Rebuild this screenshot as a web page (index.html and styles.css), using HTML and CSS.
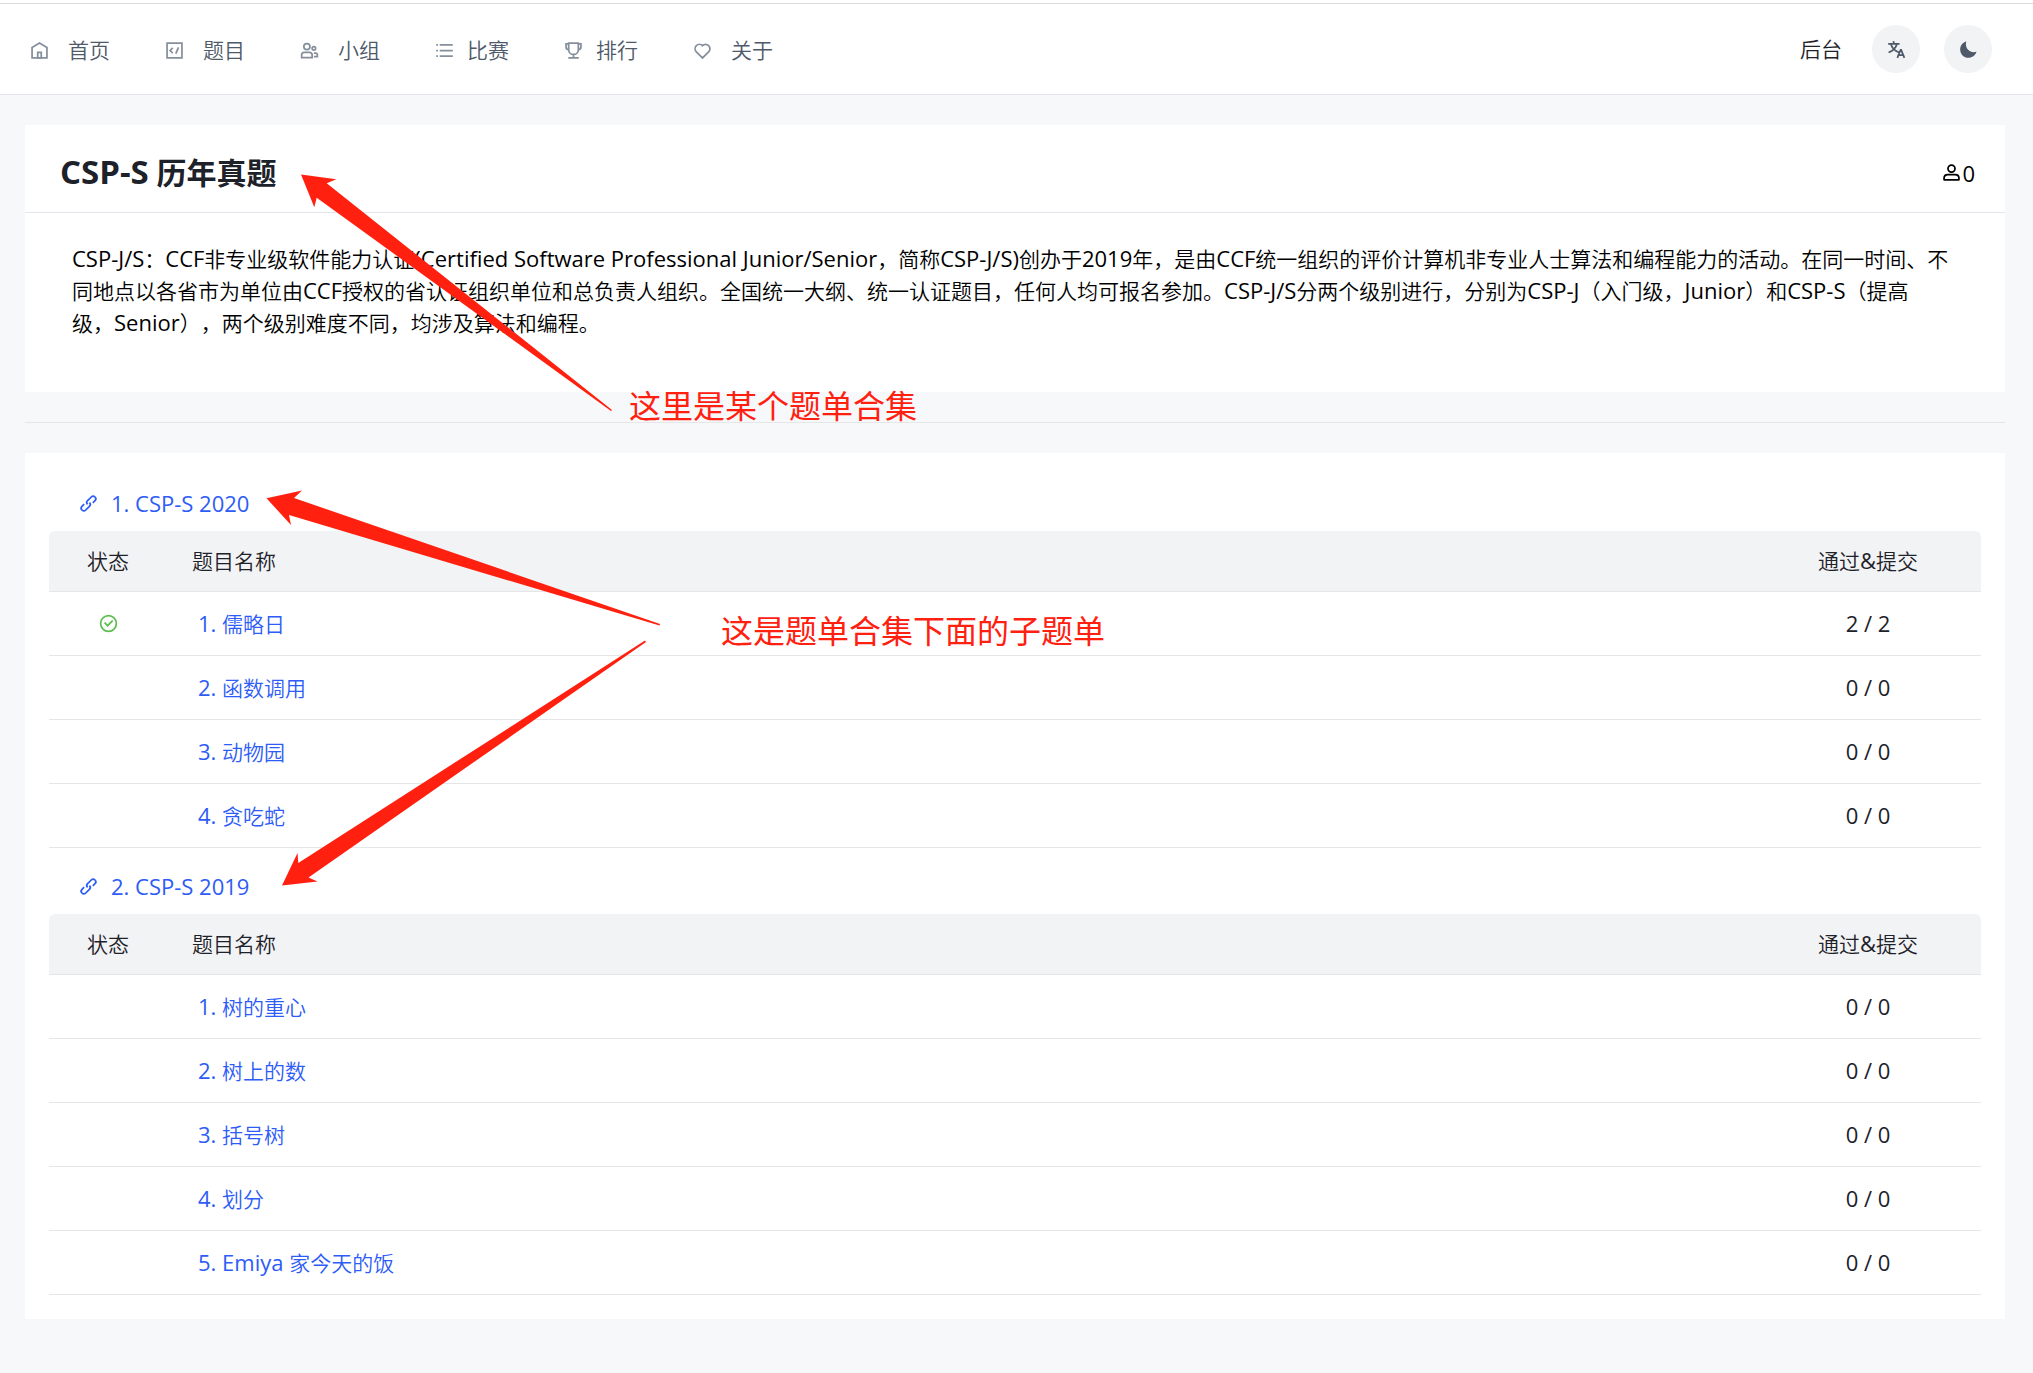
FILE: index.html
```html
<!DOCTYPE html>
<html lang="zh-CN">
<head>
<meta charset="utf-8">
<title>CSP-S 历年真题</title>
<meta name="viewport" content="width=device-width, initial-scale=1">
<link rel="stylesheet" href="styles.css">
</head>
<body>
<div class="page-edge"></div>
<header class="topbar">
  <nav class="menu">
    <a href="#"><svg class="icon" viewBox="0 0 48 48"><path d="M7 17 24 7l17 10v24H7V17Z"/><path d="M20 28h8v13h-8V28Z"/></svg>首页</a>
    <a href="#"><svg class="icon" viewBox="0 0 48 48"><path d="M7 7h34v34H7z"/><path d="m20 18-6 6 6 6M33 17l-6 14"/></svg>题目</a>
    <a href="#"><svg class="icon" viewBox="0 0 48 48"><circle cx="18" cy="15" r="7"/><circle cx="34" cy="19" r="4"/><path d="M6 34a6 6 0 0 1 6-6h12a6 6 0 0 1 6 6v6H6v-6ZM34 30h4a4 4 0 0 1 4 4v4h-8"/></svg>小组</a>
    <a href="#" class="tight"><svg class="icon" viewBox="0 0 48 48"><path d="M13 24h30M5 11h4m4 26h30M13 11h30M5 24h4M5 37h4"/></svg>比赛</a>
    <a href="#" class="tight"><svg class="icon" viewBox="0 0 48 48"><path d="M24 33c-6.075 0-11-4.925-11-11m11 11c6.075 0 11-4.925 11-11M24 33v8M13 22V7h22v15m-22 0V9H7v7a6 6 0 0 0 6 6Zm22 0V9h6v7a6 6 0 0 1-6 6ZM12 41h24"/></svg>排行</a>
    <a href="#"><svg class="icon" viewBox="0 0 48 48"><path d="M38.083 12.912a9.957 9.957 0 0 1 0 14.082L24 41 9.917 26.994A9.958 9.958 0 0 1 24 12.912a9.958 9.958 0 0 1 14.083 0Z"/></svg>关于</a>
  </nav>
  <div class="tools">
    <a href="#" class="admin">后台</a>
    <button type="button" class="round" aria-label="语言"><svg class="icon" viewBox="0 0 48 48"><path d="m42 43-2.385-6M26 43l2.384-6m11.231 0-.795-2-4.18-10h-1.28l-4.181 10-.795 2m11.231 0h-11.23M17 5l1 5M5 11h26M11 11s1.889 7.826 6.611 12.174C22.333 27.522 30 31 30 31M25 11s-1.889 7.826-6.611 12.174C13.667 27.522 6 31 6 31"/></svg></button>
    <button type="button" class="round" aria-label="深色模式"><svg class="icon solid" viewBox="0 0 48 48"><path d="M42.108 29.769c.124-.387-.258-.736-.645-.613A17.99 17.99 0 0 1 36 30c-9.941 0-18-8.059-18-18 0-1.904.296-3.74.844-5.463.123-.387-.226-.768-.613-.645C10.558 8.334 5 15.518 5 24c0 10.493 8.507 19 19 19 8.482 0 15.666-5.558 18.108-13.231Z"/></svg></button>
  </div>
</header>

<main class="content">
  <section class="card">
    <div class="card-head">
      <h1><span class="latin">CSP-S</span> 历年真题</h1>
      <span class="members"><svg class="icon" viewBox="0 0 48 48"><path d="M7 37c0-4.97 4.03-8 9-8h16c4.97 0 9 3.03 9 8v3a1 1 0 0 1-1 1H8a1 1 0 0 1-1-1v-3Z"/><circle cx="24" cy="15" r="8"/></svg><span class="latin">0</span></span>
    </div>
    <p class="intro"><span class="latin">CSP-J/S</span>：<span class="latin">CCF</span>非专业级软件能力认证<span class="latin">(Certified Software Professional Junior/Senior</span>，简称<span class="latin">CSP-J/S)</span>创办于<span class="latin">2019</span>年，是由<span class="latin">CCF</span>统一组织的评价计算机非专业人士算法和编程能力的活动。在同一时间、不同地点以各省市为单位由<span class="latin">CCF</span>授权的省认证组织单位和总负责人组织。全国统一大纲、统一认证题目，任何人均可报名参加。<span class="latin">CSP-J/S</span>分两个级别进行，分别为<span class="latin">CSP-J</span>（入门级，<span class="latin">Junior</span>）和<span class="latin">CSP-S</span>（提高<span class="keep">级，<span class="latin">Senior</span>），</span>两个级别难度不同，均涉及算法和编程。</p>
  </section>

  <hr class="divider">

  <section class="card lists">
    <article>
      <h2><a href="#"><svg class="icon" viewBox="0 0 48 48"><path d="m14.1 25.414-4.95 4.95a6 6 0 0 0 8.486 8.485l8.485-8.485a6 6 0 0 0 0-8.485m7.779.707 4.95-4.95a6 6 0 1 0-8.486-8.485l-8.485 8.485a6 6 0 0 0 0 8.485"/></svg><span class="latin">1. CSP-S 2020</span></a></h2>
      <table>
        <thead><tr><th class="state">状态</th><th class="name">题目名称</th><th class="score">通过<span class="latin">&amp;</span>提交</th></tr></thead>
        <tbody>
          <tr><td class="state"><svg class="icon passed" viewBox="0 0 48 48"><circle cx="24" cy="24" r="18"/><path d="m15 22 7 7 11.5-11.5"/></svg></td><td class="name"><a href="#"><span class="latin">1. </span>儒略日</a></td><td class="score"><span class="latin">2 / 2</span></td></tr>
          <tr><td class="state"></td><td class="name"><a href="#"><span class="latin">2. </span>函数调用</a></td><td class="score"><span class="latin">0 / 0</span></td></tr>
          <tr><td class="state"></td><td class="name"><a href="#"><span class="latin">3. </span>动物园</a></td><td class="score"><span class="latin">0 / 0</span></td></tr>
          <tr><td class="state"></td><td class="name"><a href="#"><span class="latin">4. </span>贪吃蛇</a></td><td class="score"><span class="latin">0 / 0</span></td></tr>
        </tbody>
      </table>
    </article>
    <article>
      <h2><a href="#"><svg class="icon" viewBox="0 0 48 48"><path d="m14.1 25.414-4.95 4.95a6 6 0 0 0 8.486 8.485l8.485-8.485a6 6 0 0 0 0-8.485m7.779.707 4.95-4.95a6 6 0 1 0-8.486-8.485l-8.485 8.485a6 6 0 0 0 0 8.485"/></svg><span class="latin">2. CSP-S 2019</span></a></h2>
      <table>
        <thead><tr><th class="state">状态</th><th class="name">题目名称</th><th class="score">通过<span class="latin">&amp;</span>提交</th></tr></thead>
        <tbody>
          <tr><td class="state"></td><td class="name"><a href="#"><span class="latin">1. </span>树的重心</a></td><td class="score"><span class="latin">0 / 0</span></td></tr>
          <tr><td class="state"></td><td class="name"><a href="#"><span class="latin">2. </span>树上的数</a></td><td class="score"><span class="latin">0 / 0</span></td></tr>
          <tr><td class="state"></td><td class="name"><a href="#"><span class="latin">3. </span>括号树</a></td><td class="score"><span class="latin">0 / 0</span></td></tr>
          <tr><td class="state"></td><td class="name"><a href="#"><span class="latin">4. </span>划分</a></td><td class="score"><span class="latin">0 / 0</span></td></tr>
          <tr><td class="state"></td><td class="name"><a href="#"><span class="latin">5. Emiya </span>家今天的饭</a></td><td class="score"><span class="latin">0 / 0</span></td></tr>
        </tbody>
      </table>
    </article>
  </section>
</main>

<!-- Hand-placed notes over the page -->
<svg class="arrows" width="700" height="900" viewBox="0 0 700 900" aria-hidden="true">
  <path d="M301 174.5 336.3 179.3 326.7 183.3 612 410 611 411 316.7 197.7 314.3 207.3Z"/>
  <path d="M266.5 498.3 302 490.5 294 498 660 624 659.5 625.5 289 515 291 525Z"/>
  <path d="M282 885.5 297.5 853 298.3 863 645 640.5 646 642 308.5 877.5 317.5 881.5Z"/>
</svg>
<p class="note note-set">这里是某个题单合集</p>
<p class="note note-sub">这是题单合集下面的子题单</p>
</body>
</html>
```
FILE: styles.css
```css
* {
  box-sizing: border-box;
}

body {
  position: relative;
  margin: 0;
  min-height: 100vh;
  background: #f7f8fa;
  color: #1d2129;
  font-family: "Open Sans", "Noto Sans CJK SC", sans-serif;
  font-size: 21px;
  font-weight: 350;
  line-height: 32px;
  text-spacing-trim: space-all;
}

a {
  color: inherit;
  text-decoration: none;
}

.latin {
  font-size: 22px;
  font-weight: 400;
  line-height: 1;
}

.keep {
  white-space: nowrap;
}

.icon {
  flex: none;
  width: 21px;
  height: 21px;
  fill: none;
  stroke: currentColor;
  stroke-width: 4;
}

.icon.solid {
  fill: currentColor;
  stroke: none;
}

/* Top bar */
.page-edge {
  height: 4px;
  background: #fff;
  border-bottom: 1px solid #dcdcde;
}

.topbar {
  display: flex;
  align-items: center;
  justify-content: space-between;
  min-height: 91px;
  padding: 0 41px 0 29px;
  background: #fff;
  border-bottom: 1px solid #e5e6eb;
}

.menu {
  display: flex;
  gap: 54px;
  padding-top: 2px;
  color: #4e5969;
}

.menu a {
  display: flex;
  align-items: center;
  gap: 18px;
}

.menu a.tight {
  gap: 12px;
}

.menu .icon {
  color: #86909c;
}

.tools {
  display: flex;
  align-items: center;
  gap: 24px;
}

.admin {
  margin-right: 6px;
}

.round {
  display: flex;
  align-items: center;
  justify-content: center;
  width: 48px;
  height: 48px;
  padding: 0;
  border: 0;
  border-radius: 50%;
  background: #f2f3f5;
  color: #4e5969;
}

/* Cards */
.content {
  padding: 30px 28px 54px 25px;
}

.card {
  background: #fff;
}

.card-head {
  display: flex;
  align-items: center;
  justify-content: space-between;
  min-height: 88px;
  padding: 8px 30px 0 35px;
  border-bottom: 1px solid #e5e6eb;
}

h1 {
  margin: 0;
  font-size: 30px;
  font-weight: 700;
  line-height: 40px;
}

h1 .latin {
  font-size: 33px;
  font-weight: 700;
}

.members {
  display: flex;
  align-items: center;
  color: #000;
}

.intro {
  margin: 0;
  padding: 30px 47px 53px;
  color: #000;
}

.divider {
  margin: 30px 0;
  border: 0;
  border-top: 1px solid #e5e6e8;
}

/* Problem lists */
.lists {
  display: flex;
  flex-direction: column;
  gap: 12px;
  padding: 24px;
}

h2 {
  display: flex;
  margin: 0;
  padding: 10px 29px 12px;
  font-size: 21px;
  font-weight: 400;
  line-height: 32px;
}

h2 a {
  display: flex;
  align-items: center;
  gap: 12px;
  min-height: 32px;
  color: #2d5cf6;
}

table {
  width: 100%;
  border-collapse: separate;
  border-spacing: 0;
  table-layout: fixed;
}

th,
td {
  height: 64px;
  padding: 0 25px;
  border-bottom: 1px solid #e5e6e8;
  font-weight: 350;
  text-align: left;
}

th {
  height: 61px;
  background: #f2f3f5;
}

th:first-child {
  border-top-left-radius: 6px;
}

th:last-child {
  border-top-right-radius: 6px;
}

th.state,
td.state {
  width: 118px;
  text-align: center;
}

.state .icon {
  display: block;
  margin: 0 auto;
}

th.score,
td.score {
  width: 226px;
  text-align: center;
}

td.name {
  padding-left: 31px;
}

td a {
  color: #2d5cf6;
}

.passed {
  color: #5cbf50;
}

/* Notes */
.arrows {
  position: absolute;
  top: 0;
  left: 0;
  fill: #ff2010;
  pointer-events: none;
}

.note {
  position: absolute;
  margin: 0;
  color: #ff2010;
  font-size: 32px;
  font-weight: 400;
  line-height: 40px;
  white-space: nowrap;
}

.note-set {
  top: 386px;
  left: 629px;
}

.note-sub {
  top: 611px;
  left: 721px;
}
```
